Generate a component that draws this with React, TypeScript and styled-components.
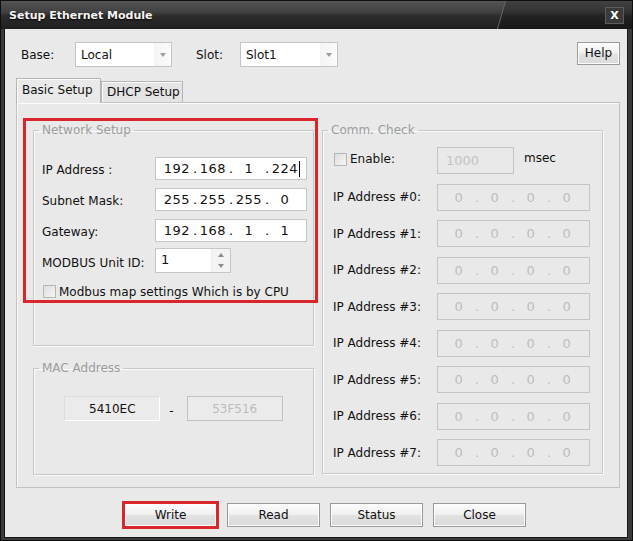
import React from 'react';
import styled, { createGlobalStyle } from 'styled-components';

const GlobalStyle = createGlobalStyle`
  html, body {
    margin: 0;
    padding: 0;
    background: #1c1c1c;
  }
  body {
    font-family: "DejaVu Sans", "Liberation Sans", sans-serif;
    font-size: 12px;
    color: #111;
  }
`;

const Window = styled.div`
  width: 633px;
  height: 541px;
  box-sizing: border-box;
  display: flex;
  flex-direction: column;
  background: #3a3a3a;
  border: 1px solid #0e0e0e;
`;

const TitleBar = styled.div`
  position: relative;
  height: 28px;
  flex: none;
  display: flex;
  align-items: center;
  justify-content: space-between;
  padding: 0 8px 0 8px;
  background: linear-gradient(to bottom, #545454 0, #414141 11px, #2c2c2c 15px, #1f1f1f 28px);
  overflow: hidden;

  &::before {
    content: '';
    position: absolute;
    top: 0;
    bottom: 0;
    left: 496px;
    right: 0;
    background: rgba(0, 0, 0, 0.22);
    clip-path: polygon(8px 0, 100% 0, 100% 100%, 0 100%);
  }
  &::after {
    content: '';
    position: absolute;
    top: 0;
    left: 500px;
    width: 1px;
    height: 28px;
    background: #6a6a6a;
    transform: skewX(-16deg);
  }
`;

const Title = styled.span`
  position: relative;
  z-index: 1;
  font-weight: bold;
  font-size: 11px;
  color: #f4f4f4;
  text-shadow: 0 1px 2px #000;
`;

const CloseButton = styled.span`
  position: relative;
  z-index: 1;
  width: 19px;
  height: 17px;
  box-sizing: border-box;
  display: flex;
  align-items: center;
  justify-content: center;
  background: #3a3a3a;
  border: 1px solid #5c5c5c;
  color: #fff;
  font-weight: bold;
  font-size: 11px;
`;

const Frame = styled.div`
  flex: 1;
  display: flex;
  padding: 0 5px 3px 4px;
`;

const Client = styled.div`
  flex: 1;
  display: flex;
  flex-direction: column;
  background: #e9e9e9;
  box-shadow: 0 0 0 1px #141414;
  padding: 13px 7px 10px 11px;
`;

const TopRow = styled.div`
  display: flex;
  align-items: center;
  height: 25px;
  padding-left: 5px;
`;

const FieldLabel = styled.span<{ $width: number; $gap?: number }>`
  width: ${(p) => p.$width}px;
  margin-left: ${(p) => p.$gap ?? 0}px;
  flex: none;
`;

const Combo = styled.div<{ $width: number }>`
  width: ${(p) => p.$width}px;
  height: 25px;
  box-sizing: border-box;
  display: flex;
  align-items: center;
  background: #fff;
  border: 1px solid #c4c4c4;
  padding-left: 5px;
`;

const ComboText = styled.span`
  flex: 1;
`;

const ComboArrow = styled.span`
  width: 17px;
  height: 100%;
  display: flex;
  align-items: center;
  justify-content: center;
  background: linear-gradient(to right, #f4f4f4, #fbfbfb);

  &::after {
    content: '';
    border-left: 3px solid transparent;
    border-right: 3px solid transparent;
    border-top: 4px solid #9c9c9c;
  }
`;

const Button = styled.button<{ $width: number; $height?: number; $marked?: boolean }>`
  width: ${(p) => p.$width}px;
  height: ${(p) => p.$height ?? 24}px;
  box-sizing: border-box;
  padding: 0;
  font-family: inherit;
  font-size: 12px;
  color: #111;
  background: linear-gradient(to bottom, #fcfcfc 0%, #f0f0f0 48%, #e2e2e2 52%, #dadada 100%);
  border: 1px solid #9a9a9a;
  box-shadow: inset 0 0 0 1px #fdfdfd;
  outline: ${(p) => (p.$marked ? '3px solid #d8262b' : 'none')};
  outline-offset: -1px;
`;

const HelpButton = styled(Button)`
  margin-left: auto;
  margin-top: -3px;
`;

const TabStrip = styled.div`
  display: flex;
  align-items: flex-end;
  height: 24px;
  margin-top: 11px;
`;

const Tab = styled.div<{ $active?: boolean; $width: number }>`
  position: relative;
  z-index: ${(p) => (p.$active ? 1 : 0)};
  width: ${(p) => p.$width}px;
  height: ${(p) => (p.$active ? 25 : 21)}px;
  margin-bottom: ${(p) => (p.$active ? -1 : 0)}px;
  box-sizing: border-box;
  display: flex;
  align-items: center;
  padding: 0 0 ${(p) => (p.$active ? 3 : 0)}px 5px;
  background: ${(p) => (p.$active ? '#e9e9e9' : '#e4e4e4')};
  border: 1px solid #b4b4b4;
  border-bottom: none;
  box-shadow: inset 1px 1px 0 #fbfbfb;
`;

const Panel = styled.div`
  position: relative;
  height: 386px;
  box-sizing: border-box;
  display: grid;
  grid-template-columns: 281px 281px;
  column-gap: 8px;
  align-items: start;
  padding: 20px 16px 12px 16px;
  background: #e9e9e9;
  border: 1px solid #c2c2c2;
  box-shadow: inset 1px 1px 0 #fbfbfb;
`;

const Column = styled.div`
  display: flex;
  flex-direction: column;
  gap: 15px;
`;

const Group = styled.fieldset<{ $height: number; $padTop: number }>`
  margin: 0;
  min-width: 0;
  height: ${(p) => p.$height}px;
  box-sizing: border-box;
  padding: ${(p) => p.$padTop}px 0 0 0;
  border: 1px solid #c8c8c8;
  box-shadow: 1px 1px 0 #fafafa, inset 1px 1px 0 #fafafa;
`;

const Legend = styled.legend`
  margin-left: 5px;
  padding: 0 3px;
  line-height: 14px;
  color: #9c9c9c;
`;

const NetGrid = styled.div`
  display: grid;
  grid-template-columns: 113px 152px;
  grid-auto-rows: 23px;
  row-gap: 8px;
  align-items: center;
  padding-left: 8px;
`;

const RowLabel = styled.span`
  padding-top: 3px;
`;

const IpBox = styled.div<{ $disabled?: boolean; $width: number; $height: number }>`
  width: ${(p) => p.$width}px;
  height: ${(p) => p.$height}px;
  box-sizing: border-box;
  display: flex;
  align-items: center;
  padding-left: 7px;
  font-size: 13px;
  background: ${(p) => (p.$disabled ? 'transparent' : '#fff')};
  color: ${(p) => (p.$disabled ? '#bdbdbd' : '#111')};
  border: 1px solid ${(p) => (p.$disabled ? '#c4c4c4' : '#c6c6c6')};
`;

const IpSeg = styled.span`
  width: 28px;
  text-align: center;
  letter-spacing: 0.5px;
`;

const IpDot = styled.span`
  width: 8px;
  text-align: center;
`;

const Caret = styled.span`
  width: 1px;
  height: 16px;
  background: #000;
`;

const SpinBox = styled.div`
  width: 76px;
  height: 25px;
  margin-top: -2px;
  box-sizing: border-box;
  display: flex;
  background: #fff;
  border: 1px solid #c6c6c6;
  font-size: 13px;
`;

const SpinValue = styled.span`
  flex: 1;
  padding: 3px 0 0 5px;
`;

const SpinButtons = styled.div`
  width: 18px;
  display: flex;
  flex-direction: column;
  background: #f3f3f3;
  border-left: 1px solid #ececec;
`;

const SpinArrow = styled.span<{ $up?: boolean }>`
  flex: 1;
  display: flex;
  align-items: center;
  justify-content: center;

  &::after {
    content: '';
    border-left: 3px solid transparent;
    border-right: 3px solid transparent;
    ${(p) => (p.$up ? 'border-bottom: 4px solid #8e8e8e;' : 'border-top: 4px solid #8e8e8e;')}
  }
`;

const CheckRow = styled.label<{ $span?: boolean; $shift?: number }>`
  display: flex;
  align-items: center;
  gap: 3px;
  margin-top: ${(p) => p.$shift ?? 0}px;
  ${(p) => (p.$span ? 'grid-column: 1 / span 2;' : '')}
`;

const CheckBox = styled.span`
  width: 13px;
  height: 13px;
  box-sizing: border-box;
  flex: none;
  margin-left: 1px;
  background: linear-gradient(135deg, #dedede, #f5f5f5);
  border: 1px solid #b6b6b6;
`;

const MacRow = styled.div`
  display: flex;
  align-items: center;
  justify-content: center;
`;

const MacField = styled.div<{ $disabled?: boolean }>`
  width: 96px;
  height: 25px;
  box-sizing: border-box;
  display: flex;
  align-items: center;
  justify-content: center;
  color: ${(p) => (p.$disabled ? '#bcbcbc' : '#111')};
  background: #ebebeb;
  border: 1px solid ${(p) => (p.$disabled ? '#c2c2c2' : '#fff')};
  border-top-color: ${(p) => (p.$disabled ? '#c2c2c2' : '#dcdcdc')};
  border-left-color: ${(p) => (p.$disabled ? '#c2c2c2' : '#dcdcdc')};
`;

const MacDash = styled.span`
  margin: 4px 13px 0 9px;
`;

const CommGrid = styled.div`
  display: grid;
  grid-template-columns: 104px auto;
  grid-auto-rows: 27px;
  row-gap: 9.5px;
  align-items: center;
  padding-left: 10px;
`;

const Inline = styled.div`
  display: flex;
  align-items: center;
`;

const Msec = styled.span`
  margin: -6px 0 0 10px;
`;

const DisabledInput = styled.div`
  width: 77px;
  height: 27px;
  box-sizing: border-box;
  display: flex;
  align-items: center;
  padding-left: 8px;
  color: #c2c2c2;
  font-size: 13px;
  border: 1px solid #c4c4c4;
`;

const Annotation = styled.div`
  position: absolute;
  left: 6px;
  top: 15px;
  width: 295px;
  height: 185px;
  box-sizing: border-box;
  border: 3px solid #d8262b;
  pointer-events: none;
`;

const ButtonRow = styled.div`
  display: flex;
  justify-content: center;
  gap: 10px;
  margin-top: 15px;
  padding-left: 14px;
`;

type IpProps = { value: string; disabled?: boolean; caret?: boolean; width: number; height: number };

function IpField({ value, disabled, caret, width, height }: IpProps) {
  const parts = value.split('.');
  return (
    <IpBox $disabled={disabled} $width={width} $height={height}>
      {parts.map((p, i) => (
        <React.Fragment key={i}>
          {i > 0 && <IpDot>.</IpDot>}
          <IpSeg>{p}</IpSeg>
        </React.Fragment>
      ))}
      {caret && <Caret />}
    </IpBox>
  );
}

const network = [
  { label: 'IP Address :', value: '192.168.1.224', caret: true },
  { label: 'Subnet Mask:', value: '255.255.255.0' },
  { label: 'Gateway:', value: '192.168.1.1' },
];

export default function App() {
  return (
    <>
      <GlobalStyle />
      <Window>
        <TitleBar>
          <Title>Setup Ethernet Module</Title>
          <CloseButton>X</CloseButton>
        </TitleBar>
        <Frame>
          <Client>
            <TopRow>
              <FieldLabel $width={54}>Base:</FieldLabel>
              <Combo $width={97}>
                <ComboText>Local</ComboText>
                <ComboArrow />
              </Combo>
              <FieldLabel $width={44} $gap={24}>Slot:</FieldLabel>
              <Combo $width={98}>
                <ComboText>Slot1</ComboText>
                <ComboArrow />
              </Combo>
              <HelpButton $width={43} $height={23}>Help</HelpButton>
            </TopRow>

            <TabStrip>
              <Tab $active $width={85}>Basic Setup</Tab>
              <Tab $width={82}>DHCP Setup</Tab>
            </TabStrip>

            <Panel>
              <Column>
                <Group $height={223} $padTop={20}>
                  <Legend>Network Setup</Legend>
                  <NetGrid>
                    {network.map((row) => (
                      <React.Fragment key={row.label}>
                        <RowLabel>{row.label}</RowLabel>
                        <IpField value={row.value} caret={row.caret} width={152} height={23} />
                      </React.Fragment>
                    ))}
                    <RowLabel>MODBUS Unit ID:</RowLabel>
                    <SpinBox>
                      <SpinValue>1</SpinValue>
                      <SpinButtons>
                        <SpinArrow $up />
                        <SpinArrow />
                      </SpinButtons>
                    </SpinBox>
                    <CheckRow $span $shift={-2}>
                      <CheckBox />
                      Modbus map settings Which is by CPU
                    </CheckRow>
                  </NetGrid>
                </Group>

                <Group $height={114} $padTop={21}>
                  <Legend>MAC Address</Legend>
                  <MacRow>
                    <MacField>5410EC</MacField>
                    <MacDash>-</MacDash>
                    <MacField $disabled>53F516</MacField>
                  </MacRow>
                </Group>
              </Column>

              <Group $height={351} $padTop={10}>
                <Legend>Comm. Check</Legend>
                <CommGrid>
                  <CheckRow $shift={-3}>
                    <CheckBox />
                    Enable:
                  </CheckRow>
                  <Inline>
                    <DisabledInput>1000</DisabledInput>
                    <Msec>msec</Msec>
                  </Inline>
                  {Array.from({ length: 8 }, (_, i) => (
                    <React.Fragment key={i}>
                      <span>IP Address #{i}:</span>
                      <IpField value="0.0.0.0" disabled width={153} height={27} />
                    </React.Fragment>
                  ))}
                </CommGrid>
              </Group>

              <Annotation />
            </Panel>

            <ButtonRow>
              <Button $width={93} $marked>Write</Button>
              <Button $width={93}>Read</Button>
              <Button $width={93}>Status</Button>
              <Button $width={93}>Close</Button>
            </ButtonRow>
          </Client>
        </Frame>
      </Window>
    </>
  );
}
